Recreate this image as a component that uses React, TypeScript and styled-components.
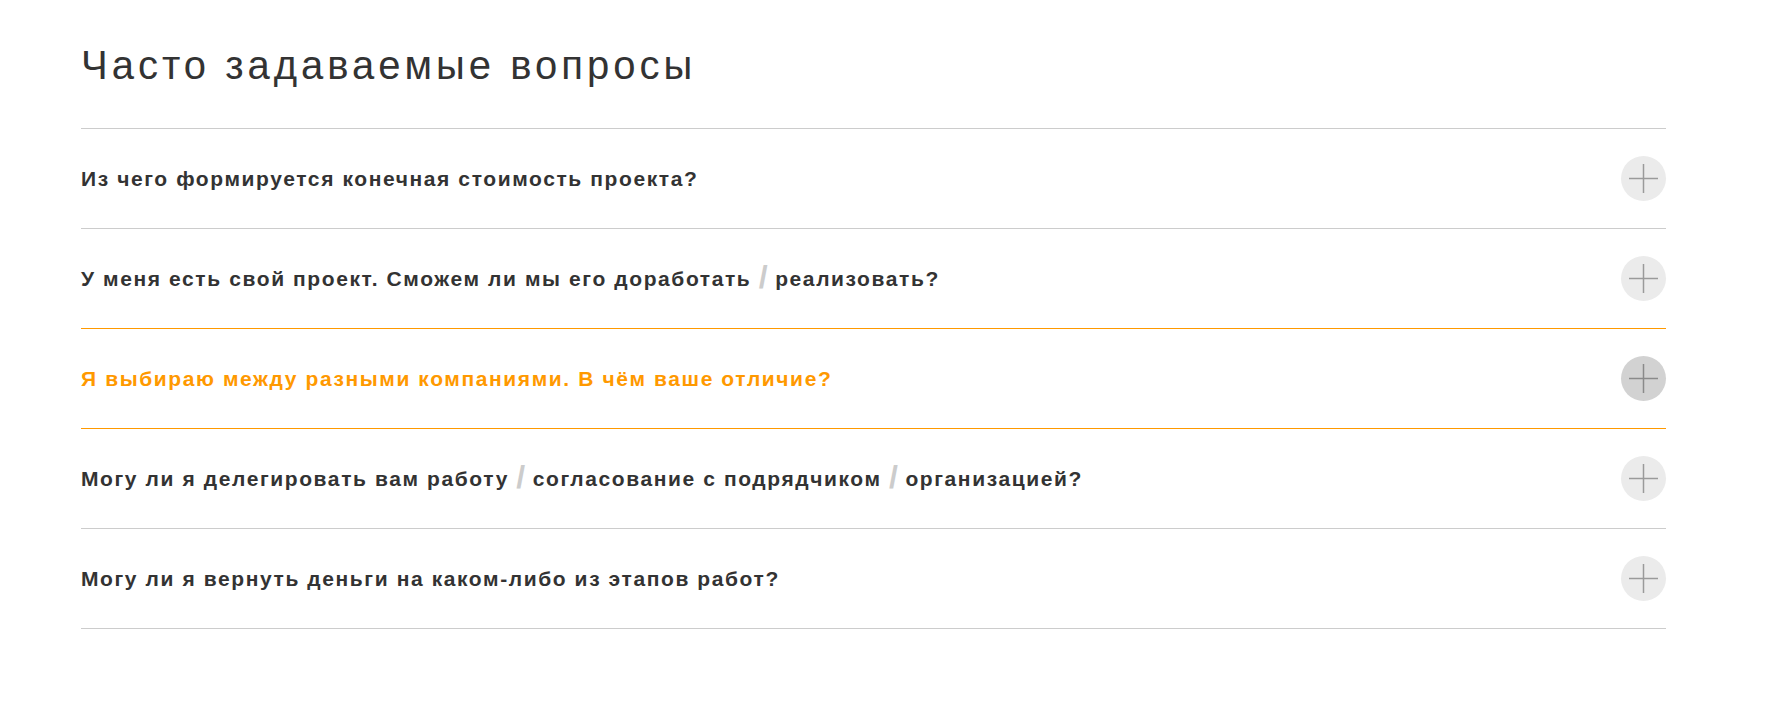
import React from "react";
import styled, { createGlobalStyle } from "styled-components";

const Global = createGlobalStyle`
  html, body { margin: 0; padding: 0; background: #fff; }
  body { font-family: "Liberation Sans", Arial, sans-serif; color: #333; }
`;

const Page = styled.div`
  padding: 42px 0 0 81px;
`;

const Section = styled.section`
  width: 1585px;
`;

const Title = styled.h2`
  margin: 0 0 40px;
  font-size: 40px;
  line-height: 46px;
  font-weight: 400;
  letter-spacing: 4px;
  color: #333;
`;

const List = styled.div`
  display: flex;
  flex-direction: column;
`;

const Item = styled.div<{ $active?: boolean; $activeNext?: boolean }>`
  display: flex;
  align-items: center;
  justify-content: space-between;
  height: 99px;
  border-top: 1px solid ${(p) => (p.$active || p.$activeNext ? "#f90" : "#ccc")};
  &:last-child {
    border-bottom: 1px solid #ccc;
  }
`;

const Question = styled.span<{ $active?: boolean }>`
  font-family: "Liberation Sans", Arial, sans-serif;
  font-weight: 700;
  font-size: 21px;
  letter-spacing: 1.6px;
  color: ${(p) => (p.$active ? "#f90" : "#333")};
`;

const Slash = styled.span`
  font-family: "Liberation Sans", Arial, sans-serif;
  font-weight: 700;
  font-size: 32px;
  line-height: 0;
  letter-spacing: 0;
  color: #ccc;
  vertical-align: -2px;
`;

const Toggle = styled.div<{ $active?: boolean }>`
  flex: none;
  width: 45px;
  height: 45px;
  border-radius: 50%;
  background: ${(p) => (p.$active ? "#d2d2d2" : "#ebebeb")};
  display: flex;
  align-items: center;
  justify-content: center;
`;

const Plus = ({ active }: { active?: boolean }) => (
  <svg width="29" height="29" viewBox="0 0 29 29">
    <path
      d="M14.5 0V29M0 14.5H29"
      stroke={active ? "#8a8a8a" : "#9a9a9a"}
      strokeWidth="1.5"
    />
  </svg>
);

const questions: string[][] = [
  ["Из чего формируется конечная стоимость проекта?"],
  ["У меня есть свой проект. Сможем ли мы его доработать", "реализовать?"],
  ["Я выбираю между разными компаниями. В чём ваше отличие?"],
  ["Могу ли я делегировать вам работу", "согласование с подрядчиком", "организацией?"],
  ["Могу ли я вернуть деньги на каком-либо из этапов работ?"],
];

const ACTIVE = 2;

export default function App() {
  return (
    <>
      <Global />
      <Page>
        <Section>
          <Title>Часто задаваемые вопросы</Title>
          <List>
            {questions.map((parts, i) => (
              <Item key={i} $active={i === ACTIVE} $activeNext={i === ACTIVE + 1}>
                <Question $active={i === ACTIVE}>
                  {parts.map((p, j) => (
                    <React.Fragment key={j}>
                      {j > 0 && <> <Slash>/</Slash> </>}
                      {p}
                    </React.Fragment>
                  ))}
                </Question>
                <Toggle $active={i === ACTIVE}>
                  <Plus active={i === ACTIVE} />
                </Toggle>
              </Item>
            ))}
          </List>
        </Section>
      </Page>
    </>
  );
}
